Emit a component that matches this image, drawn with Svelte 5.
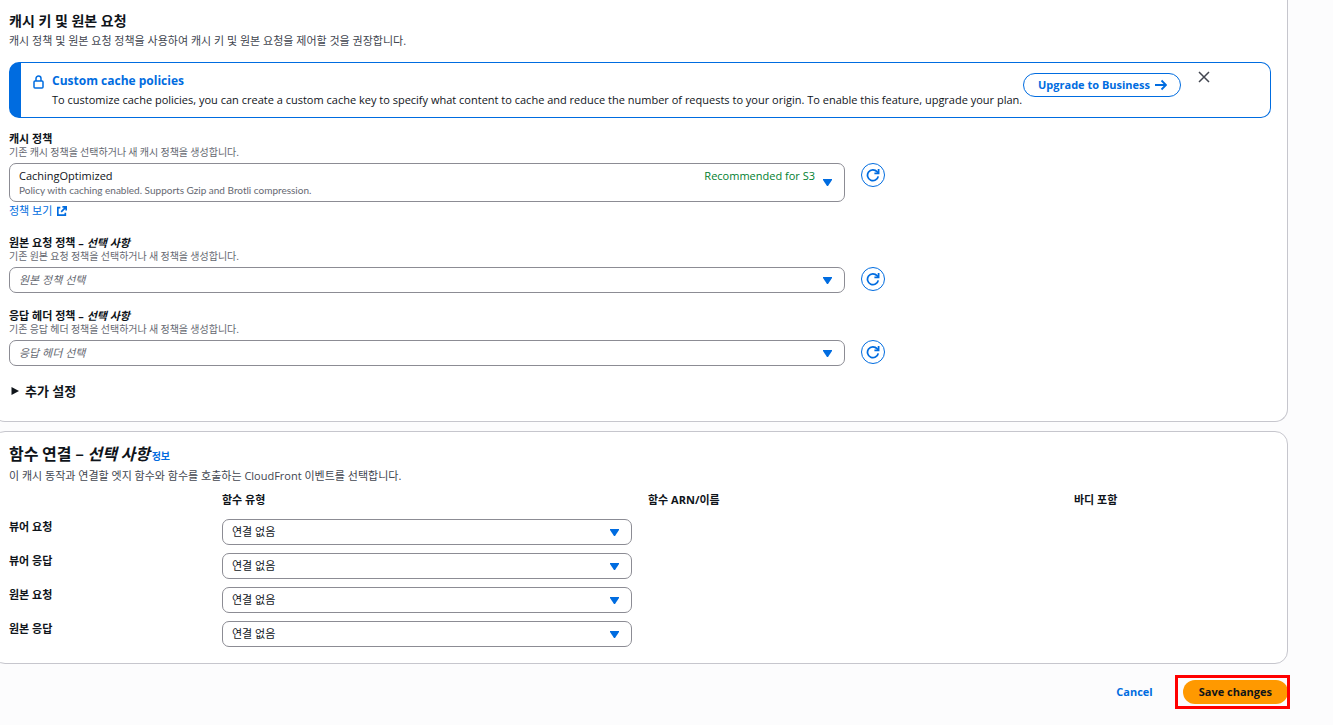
<script lang="ts">
	let cachePolicy = $state('CachingOptimized');
	let originPolicy = $state('');
	let headersPolicy = $state('');
	let showAlert = $state(true);

	let associations = $state([
		{ id: 'viewer-request', label: '뷰어 요청', value: 'none' },
		{ id: 'viewer-response', label: '뷰어 응답', value: 'none' },
		{ id: 'origin-request', label: '원본 요청', value: 'none' },
		{ id: 'origin-response', label: '원본 응답', value: 'none' }
	]);
</script>

{#snippet caret()}
	<svg class="caret" viewBox="0 0 9 7" aria-hidden="true"><path d="M0 0h9v1L5 7H4L0 1z" /></svg>
{/snippet}

{#snippet refresh(label: string)}
	<button class="refresh-btn" type="button" aria-label={label}>
		<svg viewBox="0 0 16 16" aria-hidden="true">
			<path d="M14 9.5A6.2 6.2 0 1 1 12.6 4.2L14 5.4" />
			<path d="M14.4 1v5H9.6" />
		</svg>
	</button>
{/snippet}

<main class="page">
	<section class="panel cache-panel">
		<h2 class="section-title">캐시 키 및 원본 요청</h2>
		<p class="section-desc">캐시 정책 및 원본 요청 정책을 사용하여 캐시 키 및 원본 요청을 제어할 것을 권장합니다.</p>

		{#if showAlert}
			<div class="alert">
				<svg class="lock" viewBox="0 0 11 14" aria-hidden="true">
					<rect x="1" y="6" width="9" height="7" rx="1" />
					<path d="M3 6V3.5a2.5 2.5 0 0 1 5 0V6" />
				</svg>
				<div class="alert-text">
					<h3>Custom cache policies</h3>
					<p>
						To customize cache policies, you can create a custom cache key to specify what content to
						cache and reduce the number of requests to your origin. To enable this feature, upgrade your
						plan.
					</p>
				</div>
				<button class="upgrade-btn" type="button">
					Upgrade to Business
					<svg viewBox="0 0 12 12" aria-hidden="true"><path d="M0 6h11M6.5 1.5L11 6l-4.5 4.5" /></svg>
				</button>
				<button class="close-btn" type="button" aria-label="Close" onclick={() => (showAlert = false)}>
					<svg viewBox="0 0 12 12" aria-hidden="true"><path d="M1 1l10 10M11 1L1 11" /></svg>
				</button>
			</div>
		{/if}

		<div class="fields">
			<div class="field">
				<label for="cache-policy">캐시 정책</label>
				<p class="hint">기존 캐시 정책을 선택하거나 새 캐시 정책을 생성합니다.</p>
				<div class="grid">
					<div class="select-box rich">
						<select id="cache-policy" bind:value={cachePolicy}>
							<option value="CachingOptimized">CachingOptimized</option>
						</select>
						<span class="option-desc">Policy with caching enabled. Supports Gzip and Brotli compression.</span>
						<span class="option-tag">Recommended for S3</span>
						{@render caret()}
					</div>
					{@render refresh('캐시 정책 새로 고침')}
				</div>
				<a class="policy-link" href="#policy">
					정책 보기
					<svg viewBox="0 0 12 12" aria-hidden="true">
						<path d="M4 2H1v9h9V8M6.5 1H11v4.5M11 1L5 7" />
					</svg>
				</a>
			</div>

			<div class="field">
				<label for="origin-policy">원본 요청 정책 – <em>선택 사항</em></label>
				<p class="hint">기존 원본 요청 정책을 선택하거나 새 정책을 생성합니다.</p>
				<div class="grid">
					<div class="select-box">
						<select id="origin-policy" class:placeholder={!originPolicy} bind:value={originPolicy}>
							<option value="">원본 정책 선택</option>
						</select>
						{@render caret()}
					</div>
					{@render refresh('원본 요청 정책 새로 고침')}
				</div>
			</div>

			<div class="field">
				<label for="headers-policy">응답 헤더 정책 – <em>선택 사항</em></label>
				<p class="hint">기존 응답 헤더 정책을 선택하거나 새 정책을 생성합니다.</p>
				<div class="grid">
					<div class="select-box">
						<select id="headers-policy" class:placeholder={!headersPolicy} bind:value={headersPolicy}>
							<option value="">응답 헤더 선택</option>
						</select>
						{@render caret()}
					</div>
					{@render refresh('응답 헤더 정책 새로 고침')}
				</div>
			</div>

			<button class="expand-btn" type="button" aria-expanded="false">
				<svg viewBox="0 0 8 8" aria-hidden="true"><path d="M0.5 0L8 4L0.5 8z" /></svg>
				추가 설정
			</button>
		</div>
	</section>

	<section class="panel function-panel">
		<h2 class="panel-title">함수 연결 – <em>선택 사항</em> <a href="#info">정보</a></h2>
		<p class="section-desc">이 캐시 동작과 연결할 엣지 함수와 함수를 호출하는 CloudFront 이벤트를 선택합니다.</p>

		<div class="grid column-heads">
			<span class="type-head">함수 유형</span>
			<span class="arn-head">함수 ARN/이름</span>
			<span class="body-head">바디 포함</span>
		</div>
		<div class="rows">
			{#each associations as row (row.id)}
				<div class="grid">
					<label class="row-label" for={row.id}>{row.label}</label>
					<div class="select-box narrow">
						<select id={row.id} bind:value={row.value}>
							<option value="none">연결 없음</option>
						</select>
						{@render caret()}
					</div>
				</div>
			{/each}
		</div>
	</section>

	<footer class="actions">
		<button class="cancel-btn" type="button">Cancel</button>
		<div class="highlight">
			<button class="save-btn" type="button">Save changes</button>
		</div>
	</footer>
</main>

<style>
	:global(body) {
		background: #fcfcfd;
		overflow-x: hidden;
	}

	.page {
		--blue: #006ce0;
		--text: #0f141a;
		--muted: #424650;
		--hint: #656871;
		margin: 0 45px 0 -8px;
		color: var(--text);
		font-family: 'Open Sans', 'Noto Sans CJK KR', sans-serif;
		font-size: 11px;
		line-height: 16px;
	}

	h2,
	h3,
	p {
		margin: 0;
	}

	a {
		color: var(--blue);
		text-decoration: none;
	}

	button,
	select {
		margin: 0;
		padding: 0;
		border: 0;
		background: transparent;
		color: inherit;
		font: inherit;
		cursor: pointer;
	}

	svg {
		display: block;
		flex: none;
		fill: none;
		stroke: currentColor;
	}

	.panel {
		background: #fff;
		border: 1px solid #c6c6cd;
		border-radius: 13px;
		padding: 11px 16px 16px;
	}

	.cache-panel {
		border-top: 0;
		border-top-left-radius: 0;
		border-top-right-radius: 0;
		padding-bottom: 21px;
	}

	.function-panel {
		margin-top: 9px;
	}

	.section-title {
		font-size: 14px;
		line-height: 20px;
	}

	.section-desc {
		margin-top: 2px;
		color: var(--muted);
	}

	.grid {
		display: grid;
		grid-template-columns: repeat(12, 1fr);
		column-gap: 16px;
		align-items: start;
	}

	/* Upgrade notice */
	.alert {
		display: flex;
		align-items: flex-start;
		box-sizing: border-box;
		min-height: 56px;
		margin-top: 13px;
		padding: 8px 60px 8px 12px;
		border: 1px solid var(--blue);
		border-left-width: 12px;
		border-radius: 10px;
	}

	.lock {
		width: 11px;
		height: 14px;
		margin: 4px 8px 0 0;
		color: var(--blue);
		stroke-width: 1.5;
	}

	.alert-text {
		flex: 1;
		padding-top: 2px;
	}

	.alert-text h3 {
		color: var(--blue);
		font-size: 12px;
		line-height: 16px;
	}

	.alert-text p {
		margin-top: 3px;
	}

	.upgrade-btn {
		display: flex;
		align-items: center;
		gap: 5px;
		height: 24px;
		margin-top: 2px;
		padding: 0 13px 0 14px;
		border: 1px solid var(--blue);
		border-radius: 12px;
		color: var(--blue);
		font-weight: 700;
		white-space: nowrap;
	}

	.upgrade-btn svg {
		width: 12px;
		height: 12px;
		stroke-width: 1.8;
	}

	.close-btn {
		margin-left: 17px;
		color: var(--muted);
	}

	.close-btn svg {
		width: 12px;
		height: 12px;
		stroke-width: 1.5;
	}

	/* Form fields */
	.fields {
		display: flex;
		flex-direction: column;
		gap: 16px;
		margin-top: 14px;
	}

	label {
		display: block;
		font-weight: 700;
		line-height: 14px;
	}

	.hint,
	.option-desc {
		color: var(--hint);
		font-size: 10px;
		line-height: 12px;
	}

	.hint {
		margin-bottom: 5px;
		font-family: 'Noto Sans CJK KR', sans-serif;
	}

	.select-box {
		grid-column: span 8;
		display: grid;
		grid-template-columns: 1fr auto auto;
		align-items: center;
		column-gap: 8px;
		box-sizing: border-box;
		min-height: 26px;
		padding-right: 12px;
		border: 1px solid #8c8c94;
		border-radius: 7px;
	}

	.select-box.narrow {
		grid-column: span 4;
	}

	.select-box select {
		grid-area: 1 / 1 / -1 / -1;
		align-self: stretch;
		appearance: none;
		margin-right: -12px;
		padding: 0 9px;
		border-radius: 7px;
	}

	.select-box select.placeholder {
		color: var(--hint);
		font-style: italic;
	}

	.caret {
		grid-column: 3;
		grid-row: 1 / -1;
		width: 9px;
		height: 7px;
		fill: var(--blue);
		stroke: none;
		pointer-events: none;
	}

	.rich {
		grid-template-rows: 16px 12px;
		padding-block: 4px 5px;
	}

	.rich select {
		margin-block: -4px -5px;
		padding-bottom: 13px;
	}

	.option-desc {
		grid-area: 2 / 1;
		padding-left: 9px;
		font-family: Lato, sans-serif;
		pointer-events: none;
	}

	.option-tag {
		grid-area: 1 / 2;
		color: #00802f;
		pointer-events: none;
	}

	.refresh-btn {
		display: flex;
		align-items: center;
		justify-content: center;
		width: 24px;
		height: 24px;
		border: 1px solid var(--blue);
		border-radius: 50%;
		color: var(--blue);
	}

	.refresh-btn svg {
		width: 14px;
		height: 14px;
		stroke-width: 2;
	}

	.policy-link {
		display: inline-flex;
		align-items: center;
		gap: 5px;
		line-height: 18px;
		vertical-align: top;
	}

	.policy-link svg {
		width: 10px;
		height: 10px;
		stroke-width: 2;
	}

	.expand-btn {
		display: flex;
		align-items: center;
		align-self: flex-start;
		gap: 6px;
		padding-left: 2px;
		font-size: 13px;
		font-weight: 700;
		line-height: 18px;
	}

	.expand-btn svg {
		width: 8px;
		height: 8px;
		fill: currentColor;
		stroke: none;
	}

	/* Function associations */
	.panel-title {
		font-family: 'Noto Sans CJK KR', sans-serif;
		font-size: 16px;
		line-height: 20px;
	}

	.panel-title a {
		margin-left: -2px;
		font-size: 10px;
	}

	.column-heads {
		margin-top: 8px;
		font-weight: 700;
	}

	.type-head {
		grid-column: 3 / span 4;
	}

	.arn-head {
		grid-column: 7 / span 4;
	}

	.body-head {
		grid-column: 11 / span 2;
	}

	.rows {
		display: flex;
		flex-direction: column;
		gap: 8px;
		margin-top: 11px;
	}

	.row-label {
		grid-column: span 2;
		line-height: 16px;
	}

	.actions {
		display: flex;
		align-items: center;
		justify-content: flex-end;
		gap: 30px;
		padding: 16px 0;
		font-weight: 700;
	}

	.cancel-btn {
		color: var(--blue);
	}

	.highlight {
		position: relative;
	}

	.highlight::after {
		content: '';
		position: absolute;
		inset: -5px -2px -5px -8px;
		border: 3px solid #f00;
		pointer-events: none;
	}

	.save-btn {
		display: block;
		height: 24px;
		padding: 0 16px;
		border-radius: 12px;
		background: #ff9900;
	}
</style>
